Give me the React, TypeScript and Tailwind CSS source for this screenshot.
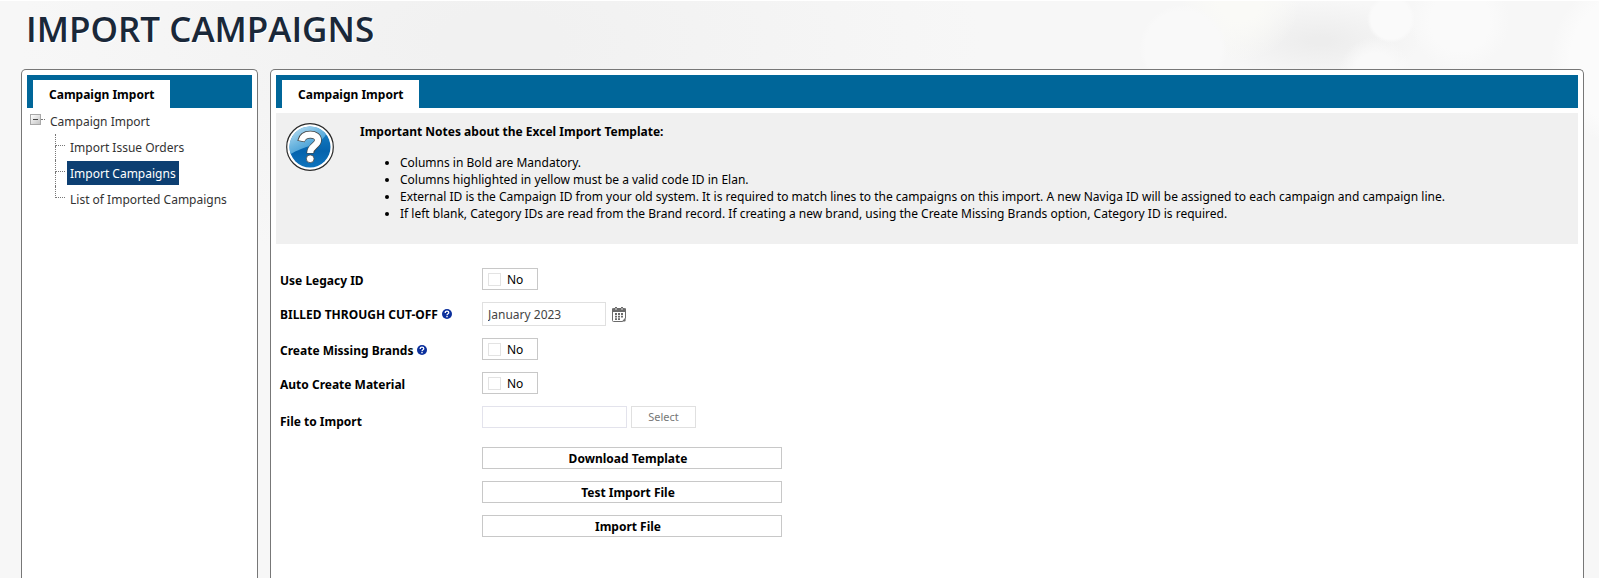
import { useState, type ReactNode } from "react";

const treeItems = [
  { label: "Import Issue Orders", selected: false },
  { label: "Import Campaigns", selected: true },
  { label: "List of Imported Campaigns", selected: false },
];

const notes = [
  "Columns in Bold are Mandatory.",
  "Columns highlighted in yellow must be a valid code ID in Elan.",
  "External ID is the Campaign ID from your old system. It is required to match lines to the campaigns on this import. A new Naviga ID will be assigned to each campaign and campaign line.",
  "If left blank, Category IDs are read from the Brand record. If creating a new brand, using the Create Missing Brands option, Category ID is required.",
];

function QuestionBadge() {
  return (
    <svg viewBox="0 0 48 48" className="size-12 shrink-0" aria-hidden="true">
      <defs>
        <linearGradient id="base" x1="0" y1="0" x2="0" y2="1">
          <stop offset="0" stopColor="#1b84c8" />
          <stop offset="0.6" stopColor="#0563ad" />
          <stop offset="1" stopColor="#0f74bd" />
        </linearGradient>
        <linearGradient id="gloss" x1="0" y1="0" x2="0.7" y2="1">
          <stop offset="0" stopColor="#c4e3f5" />
          <stop offset="0.5" stopColor="#6fb7e0" />
          <stop offset="1" stopColor="#2b8fd0" />
        </linearGradient>
      </defs>
      <circle cx="24" cy="24" r="23.3" fill="#fff" stroke="#2a2a2a" strokeWidth="1.2" />
      <circle cx="24" cy="24" r="20.5" fill="url(#base)" />
      <path d="M3.6 26.5A20.5 20.5 0 0 1 40 11.2C35 22 18 23 4.6 31Z" fill="url(#gloss)" />
      <g fill="none" strokeLinecap="butt" strokeLinejoin="round">
        <path d="M15 18.4C16.2 12.6 20.2 11.6 24.4 11.6C29.2 11.6 32 13.8 32 17.2C32 22.6 24.2 22.8 24.2 30.6" stroke="#444" strokeWidth="7.6" />
        <path d="M15.4 17.9C16.6 12.9 20.4 11.6 24.4 11.6C29.2 11.6 32 13.8 32 17.2C32 22.6 24.2 22.8 24.2 30" stroke="#fff" strokeWidth="6.2" />
      </g>
      <circle cx="24.2" cy="35.8" r="3.9" fill="#fff" stroke="#444" strokeWidth="0.8" />
    </svg>
  );
}

function HelpDot() {
  return (
    <svg viewBox="0 0 10 10" className="size-[10px] shrink-0" role="img" aria-label="Help">
      <circle cx="5" cy="5" r="5" fill="#0a2f9c" />
      <path d="M3.2 3.9C3.2 2.6 4 2.1 5 2.1S6.8 2.7 6.8 3.7C6.8 4.8 5 4.8 5 6.2" fill="none" stroke="#fff" strokeWidth="1.3" />
      <rect x="4.3" y="7" width="1.4" height="1.3" fill="#fff" />
    </svg>
  );
}

function CalendarIcon() {
  return (
    <svg viewBox="0 0 14 15" className="h-[15px] w-[14px]" aria-hidden="true">
      <path d="M1.5 1.5H12.5A1 1 0 0 1 13.5 2.5V11L10.5 14.5H1.5A1 1 0 0 1 .5 13.5V2.5A1 1 0 0 1 1.5 1.5Z" fill="#fff" stroke="#6b6b6b" />
      <path d="M0 1.5H14V5H0Z" fill="#6b6b6b" />
      <path d="M3 0H5V2H3ZM9 0H11V2H9Z" fill="#6b6b6b" />
      <path d="M4 1V3M10 1V3" stroke="#fff" strokeWidth="0.8" />
      <path d="M6 6H8V8H6ZM9 6H11V8H9ZM3 8.7H5V10.5H3ZM6 8.7H8V10.5H6ZM9 8.7H11V10.5H9ZM3 11.3H5V13H3ZM6 11.3H8V13H6ZM3 6H5V8H3Z" fill="#6b6b6b" />
      <path d="M10 14.6L13.6 11V13.6A1 1 0 0 1 12.6 14.6Z" fill="#6b6b6b" />
    </svg>
  );
}

function Panel({ className, children }: { className: string; children: ReactNode }) {
  return (
    <section className={`rounded-t-[5px] border border-b-0 border-[#777] bg-white px-[5px] pt-[5px] ${className}`}>
      <div className="flex h-[33px] items-end bg-[#006699] pl-[6px]">
        <h2 className="flex h-7 items-center bg-white px-4 font-bold">Campaign Import</h2>
      </div>
      {children}
    </section>
  );
}

function Field({ id, label, help, className, children }: { id: string; label: string; help?: boolean; className: string; children: ReactNode }) {
  return (
    <div className={`flex items-start ${className}`}>
      <div className="flex h-6 w-[202px] shrink-0 items-center gap-1">
        <label htmlFor={id} className="font-bold">{label}</label>
        {help && <HelpDot />}
      </div>
      {children}
    </div>
  );
}

function Toggle({ id }: { id: string }) {
  const [on, setOn] = useState(false);
  return (
    <label className="flex h-[22px] w-14 items-center gap-[6px] border border-[#c8c8c8] bg-white pl-[5px]">
      <input
        id={id}
        type="checkbox"
        checked={on}
        onChange={(e) => setOn(e.target.checked)}
        className="size-[13px] shrink-0 appearance-none border border-[#e3e3e3] bg-white checked:bg-[#006699]"
      />
      {on ? "Yes" : "No"}
    </label>
  );
}

export default function App() {
  return (
    <div className="flex min-h-screen flex-col border-t border-white bg-[#f7f7f7] bg-[radial-gradient(circle_at_1391px_18px,#fafafa_20px,transparent_24px),radial-gradient(circle_at_1183px_48px,#f9f9f9_38px,transparent_44px),radial-gradient(circle_at_1240px_0px,#fafaf7_20px,transparent_60px),radial-gradient(circle_at_1460px_20px,#fafafa_30px,transparent_50px),radial-gradient(circle_at_1375px_72px,#f9f9f9_20px,transparent_36px),radial-gradient(ellipse_at_1320px_40px,#ededed_10px,transparent_100px),radial-gradient(circle_at_1640px_60px,#fbfbfb_70px,transparent_90px),radial-gradient(ellipse_at_500px_40px,#f1f1f1_60px,transparent_480px)] pr-[15px] pl-[21px] font-['Noto_Sans','Open_Sans',sans-serif] text-[12px] leading-[17px] text-black">
      <header className="flex h-[68px] items-start pt-[5px]">
        <h1 className="pl-[5px] font-['Open_Sans','Noto_Sans',sans-serif] text-[35px] leading-[46px] font-semibold text-[#1a2839] [text-shadow:1px_1px_0_#fff]">IMPORT CAMPAIGNS</h1>
      </header>
      <main className="flex flex-1 gap-3">
        <Panel className="w-[237px] shrink-0">
          <nav className="pl-[3px] text-[#333]">
            <div className="flex h-[26px] items-center">
              <button type="button" aria-label="Collapse" className="mb-1 flex size-[11px] items-center justify-center border border-[#a8a8a8] bg-linear-to-br from-white to-[#c4c4c4]">
                <span className="h-px w-[5px] bg-[#444]" />
              </button>
              <span className="mb-1 w-1 border-b border-dotted border-[#777]" />
              <a href="#campaign-import" className="ml-[5px]">Campaign Import</a>
            </div>
            <ul className="pl-[25px]">
              {treeItems.map((item, i) => (
                <li key={item.label} className="flex h-[26px] items-center">
                  <span className="flex h-full w-[10px] flex-col">
                    <span className="h-3 border-b border-l border-dotted border-[#777]" />
                    {i < treeItems.length - 1 && <span className="flex-1 border-l border-dotted border-[#777]" />}
                  </span>
                  <a
                    href="#item"
                    className={`ml-[2px] flex h-6 items-center px-[3px] whitespace-nowrap ${item.selected ? "bg-[#0d3f72] text-white" : ""}`}
                  >
                    {item.label}
                  </a>
                </li>
              ))}
            </ul>
          </nav>
        </Panel>
        <Panel className="min-w-0 flex-1">
          <div className="mt-[5px] flex gap-[26px] bg-[#f0f0f0] px-[10px] pt-[10px] pb-[22px]">
            <QuestionBadge />
            <div className="min-w-0">
              <h3 className="font-bold">Important Notes about the Excel Import Template:</h3>
              <ul className="mt-[14px] list-disc pl-10">
                {notes.map((n) => (
                  <li key={n}>{n}</li>
                ))}
              </ul>
            </div>
          </div>
          <form className="pt-6 pl-1" onSubmit={(e) => e.preventDefault()}>
            <Field id="legacy" label="Use Legacy ID" className="h-[34px]">
              <Toggle id="legacy" />
            </Field>
            <Field id="cutoff" label="BILLED THROUGH CUT-OFF" help className="h-9">
              <input id="cutoff" defaultValue="January 2023" className="h-6 w-[124px] border border-[#e0e0e0] bg-white px-[5px] text-[#444]" />
              <button type="button" aria-label="Choose month" className="ml-[6px] flex h-6 items-center">
                <CalendarIcon />
              </button>
            </Field>
            <Field id="brands" label="Create Missing Brands" help className="h-[34px]">
              <Toggle id="brands" />
            </Field>
            <Field id="material" label="Auto Create Material" className="h-[34px]">
              <Toggle id="material" />
            </Field>
            <div className="flex h-[41px] items-start">
              <label htmlFor="file" className="flex h-[30px] w-[202px] shrink-0 items-center font-bold">File to Import</label>
              <input id="file" readOnly className="h-[22px] w-[145px] border border-[#e3e3ec] bg-white px-1" />
              <button type="button" className="ml-1 h-[22px] w-[65px] border border-[#e0e0e0] bg-white pb-[2px] text-[11px] text-[#777]">Select</button>
            </div>
            <div className="ml-[202px] flex w-[300px] flex-col gap-3">
              {["Download Template", "Test Import File", "Import File"].map((t) => (
                <button key={t} type="button" className="h-[22px] border border-[#c8c8c8] bg-white pr-2 leading-[17px] font-bold">{t}</button>
              ))}
            </div>
          </form>
        </Panel>
      </main>
    </div>
  );
}
